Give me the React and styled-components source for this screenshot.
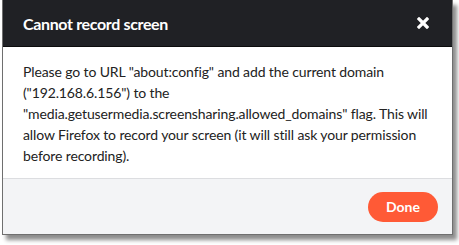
import styled, { createGlobalStyle } from 'styled-components';

const GlobalStyle = createGlobalStyle`
    html, body {
        margin: 0;
        padding: 0;
        background: #ffffff;
    }
    body {
        font-family: Lato, "Open Sans", "Liberation Sans", sans-serif;
    }
`;

const Page = styled.div`
    width: 459px;
    height: 245px;
    padding: 0 0 0 2px;
    box-sizing: border-box;
`;

const Dialog = styled.div`
    width: 451px;
    border: 1px solid #6f6f6f;
    border-top: none;
    box-sizing: border-box;
    box-shadow: 4px 5px 4px rgba(0, 0, 0, 0.45);
    background: #fff;
`;

const Header = styled.div`
    display: flex;
    align-items: center;
    justify-content: space-between;
    height: 46px;
    padding: 0 23px 0 20px;
    background: #202125;
    border-bottom: 1px solid #0c0c0d;
`;

const Title = styled.h1`
    margin: 0;
    font-size: 16px;
    font-weight: 700;
    letter-spacing: -0.35px;
    color: #fff;
`;

const CloseButton = styled.button`
    display: flex;
    padding: 0;
    border: none;
    background: none;
    cursor: pointer;
`;

const Body = styled.div`
    padding: 14px 12px 12px 20px;
    border-bottom: 1px solid #dcdde0;
`;

const Message = styled.p`
    margin: 0;
    font-size: 14px;
    line-height: 21px;
    letter-spacing: -0.12px;
    color: #222;
`;

const Footer = styled.div`
    display: flex;
    justify-content: flex-end;
    align-items: center;
    height: 55px;
    padding: 0 14px;
    background: #f3f4f6;
`;

const Button = styled.button`
    width: 70px;
    height: 30px;
    border: none;
    border-radius: 15px;
    background: ${(props) => props.color || '#ff5a36'};
    color: #fff;
    font-family: inherit;
    font-size: 14px;
    font-weight: 700;
    cursor: pointer;
`;

const App = () => {
    return (
        <Page>
            <GlobalStyle />
            <Dialog>
                <Header>
                    <Title>Cannot record screen</Title>
                    <CloseButton aria-label="Close">
                        <svg width="12" height="12" viewBox="0 0 12 12">
                            <path d="M2 2 L10 10 M10 2 L2 10" stroke="#fff" strokeWidth="3.2" strokeLinecap="square" />
                        </svg>
                    </CloseButton>
                </Header>
                <Body>
                    <Message>
                        Please go to URL "about:config" and add the current domain ("192.168.6.156") to the
                        "media.getusermedia.screensharing.allowed_domains" flag. This will allow Firefox to
                        record your screen (it will still ask your permission before recording).
                    </Message>
                </Body>
                <Footer>
                    <Button>Done</Button>
                </Footer>
            </Dialog>
        </Page>
    );
};

export default App;
